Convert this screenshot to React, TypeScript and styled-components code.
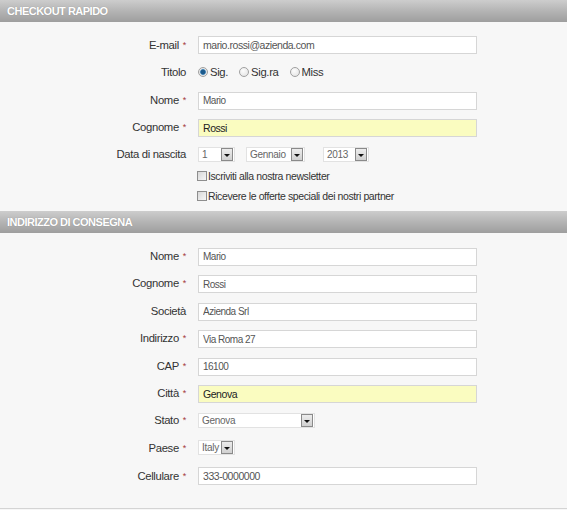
import React from 'react'
import styled, { createGlobalStyle } from 'styled-components'

const GlobalStyle = createGlobalStyle`
  html, body {
    margin: 0;
    padding: 0;
    background: #f7f7f7;
  }
  body {
    font-family: 'Liberation Sans', Arial, sans-serif;
    color: #333;
  }
`

const Page = styled.div`
  width: 567px;
  background: #f7f7f7;
  border-bottom: 1px solid #d4d4d4;
`

const SectionHeader = styled.div`
  height: 22px;
  padding-left: 7px;
  display: flex;
  align-items: center;
  background: linear-gradient(to bottom, #cdcdcd 0%, #b4b4b4 50%, #9e9e9e 100%);
  color: #fff;
  font-size: 11px;
  font-weight: 700;
  letter-spacing: -0.5px;
  text-shadow: 0 0 1px rgba(0, 0, 0, 0.25);
`

const SectionBody = styled.div<{ bottom: number }>`
  padding: 13px 0 ${({ bottom }) => bottom}px;
  display: flex;
  flex-direction: column;
`

const Rows = styled.div`
  display: flex;
  flex-direction: column;
  gap: 9.5px;
`

const Row = styled.div`
  display: grid;
  grid-template-columns: 186px 1fr;
  column-gap: 12px;
  align-items: center;
  height: 18px;
`

const Label = styled.label`
  text-align: right;
  font-size: 11.3px;
  letter-spacing: -0.35px;
  color: #333;
  white-space: nowrap;
`

const Req = styled.span`
  color: #a33a3a;
  font-size: 9px;
  margin-left: 4px;
  vertical-align: 1px;
`

const TextInput = styled.input<{ $hl?: boolean; $small?: boolean }>`
  box-sizing: border-box;
  width: 279px;
  height: 18px;
  margin: 0;
  padding: 0 4px;
  border: 1px solid #d6d6d6;
  background: ${({ $hl }) => ($hl ? '#fafcc0' : '#fff')};
  font-family: 'Liberation Sans', Arial, sans-serif;
  font-size: ${({ $small }) => ($small ? '10px' : '10.5px')};
  letter-spacing: ${({ $small }) => ($small ? '-0.5px' : '-0.45px')};
  color: ${({ $hl }) => ($hl ? '#222' : '#555')};
  outline: none;
`

const Inline = styled.div`
  display: flex;
  align-items: center;
  gap: 11px;
`

const Choice = styled.label`
  display: flex;
  align-items: center;
  gap: 2px;
  font-size: 11.3px;
  letter-spacing: -0.35px;
  color: #333;
`

const RadioDot = styled.span<{ checked?: boolean }>`
  box-sizing: border-box;
  width: 10px;
  height: 10px;
  border-radius: 50%;
  border: 1px solid #a0a0a0;
  background: ${({ checked }) =>
    checked
      ? 'radial-gradient(circle, #1c5a8c 0 2px, #4f8fc0 2.6px, #e4e4e4 3.2px, #f4f4f4 100%)'
      : 'radial-gradient(circle at 40% 35%, #fcfcfc 0, #e0e0e0 100%)'};
`

const CheckBox = styled.span`
  box-sizing: border-box;
  width: 10px;
  height: 10px;
  border: 1px solid #8e8e8e;
  background: linear-gradient(135deg, #d8d8d8, #f6f6f6);
`

const CheckRows = styled.div`
  display: flex;
  flex-direction: column;
  gap: 6px;
  margin-top: 6px;
  padding-left: 197px;
`

const CheckRow = styled.label`
  height: 14px;
  display: flex;
  align-items: center;
  gap: 1px;
  font-size: 10.5px;
  letter-spacing: -0.4px;
  color: #333;
`

const Select = styled.div<{ width: number; offset?: number }>`
  box-sizing: border-box;
  position: relative;
  width: ${({ width }) => width}px;
  margin-left: ${({ offset = 0 }) => offset}px;
  height: 15px;
  border: 1px solid #e2e2e2;
  background: #fff;
  display: flex;
  align-items: center;
  padding-left: 3px;
  font-size: 10px;
  letter-spacing: -0.3px;
  color: #666;
`

const Arrow = styled.span`
  box-sizing: border-box;
  position: absolute;
  right: 1px;
  top: 0px;
  width: 12px;
  height: 13px;
  border: 1px solid #8a8a8a;
  background: linear-gradient(to bottom, #ececec, #d0d0d0);
  display: flex;
  align-items: center;
  justify-content: center;

  &::after {
    content: '';
    display: block;
    margin-top: 2px;
    border-left: 3px solid transparent;
    border-right: 3px solid transparent;
    border-top: 3px solid #111;
  }
`

const Field = ({ label, req, children }: { label: string; req?: boolean; children: React.ReactNode }) => (
  <Row>
    <Label>
      {label}
      {req && <Req>*</Req>}
    </Label>
    <div>{children}</div>
  </Row>
)

const Dropdown = ({ value, width, offset }: { value: string; width: number; offset?: number }) => (
  <Select width={width} offset={offset}>
    {value}
    <Arrow />
  </Select>
)

const shipping = [
  { label: 'Nome', req: true, value: 'Mario' },
  { label: 'Cognome', req: true, value: 'Rossi' },
  { label: 'Società', req: false, value: 'Azienda Srl' },
  { label: 'Indirizzo', req: true, value: 'Via Roma 27' },
  { label: 'CAP', req: true, value: '16100' },
]

export default function App() {
  return (
    <Page>
      <GlobalStyle />
      <SectionHeader>CHECKOUT RAPIDO</SectionHeader>
      <SectionBody bottom={8}>
        <Rows>
          <Field label="E-mail" req>
            <TextInput defaultValue="mario.rossi@azienda.com" />
          </Field>
          <Field label="Titolo">
            <Inline>
              <Choice>
                <RadioDot checked /> Sig.
              </Choice>
              <Choice>
                <RadioDot /> Sig.ra
              </Choice>
              <Choice>
                <RadioDot /> Miss
              </Choice>
            </Inline>
          </Field>
          <Field label="Nome" req>
            <TextInput $small defaultValue="Mario" />
          </Field>
          <Field label="Cognome" req>
            <TextInput $hl defaultValue="Rossi" />
          </Field>
          <Field label="Data di nascita">
            <Inline>
              <Dropdown value="1" width={37} />
              <Dropdown value="Gennaio" width={59} />
              <Dropdown value="2013" width={46} offset={7} />
            </Inline>
          </Field>
        </Rows>
        <CheckRows>
          <CheckRow>
            <CheckBox /> Iscriviti alla nostra newsletter
          </CheckRow>
          <CheckRow>
            <CheckBox /> Ricevere le offerte speciali dei nostri partner
          </CheckRow>
        </CheckRows>
      </SectionBody>
      <SectionHeader>INDIRIZZO DI CONSEGNA</SectionHeader>
      <SectionBody bottom={24}>
        <Rows>
          {shipping.map((f) => (
            <Field key={f.label} label={f.label} req={f.req}>
              <TextInput $small defaultValue={f.value} />
            </Field>
          ))}
          <Field label="Città" req>
            <TextInput $hl defaultValue="Genova" />
          </Field>
          <Field label="Stato" req>
            <Dropdown value="Genova" width={117} />
          </Field>
          <Field label="Paese" req>
            <Dropdown value="Italy" width={37} />
          </Field>
          <Field label="Cellulare" req>
            <TextInput defaultValue="333-0000000" />
          </Field>
        </Rows>
      </SectionBody>
    </Page>
  )
}
